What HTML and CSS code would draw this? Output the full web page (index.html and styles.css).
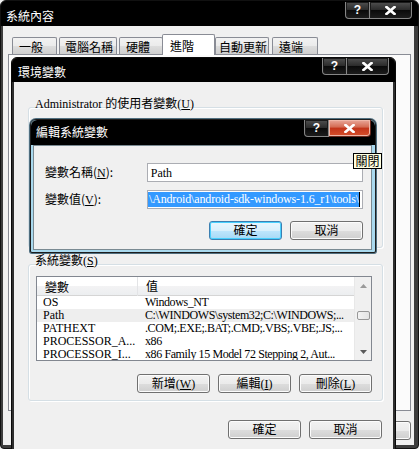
FILE: index.html
```html
<!DOCTYPE html>
<html>
<head>
<meta charset="utf-8">
<title>環境變數</title>
<link rel="stylesheet" href="styles.css">
</head>
<body>
<div class="win outer">
  <div class="tbar otbar">
    <span class="ttl">系統內容</span>
    <div class="tbtns"><span class="tb help">?</span><span class="tb close"><svg width="11" height="9" viewBox="0 0 11 9"><path d="M1.5 1 L9.5 8 M9.5 1 L1.5 8" stroke="#fff" stroke-width="2.6" stroke-linecap="square"/></svg></span></div>
  </div>
  <div class="obody">
    <div class="tabs">
      <span class="tab">一般</span><span class="tab">電腦名稱</span><span class="tab">硬體</span><span class="tab sel">進階</span><span class="tab">自動更新</span><span class="tab">遠端</span>
    </div>
    <div class="panel"></div>
    <div class="btnrow obtns"><span class="btn" aria-label="確定"></span><span class="btn" aria-label="取消"></span><span class="btn" aria-label="套用"></span></div>
  </div>
</div>

<div class="win env">
  <div class="tbar etbar">
    <span class="ttl">環境變數</span>
    <div class="tbtns"><span class="tb help">?</span><span class="tb close"><svg width="11" height="9" viewBox="0 0 11 9"><path d="M1.5 1 L9.5 8 M9.5 1 L1.5 8" stroke="#fff" stroke-width="2.6" stroke-linecap="square"/></svg></span></div>
  </div>
  <div class="ebody">
    <div class="glabel">Administrator 的使用者變數(<u>U</u>)</div>
    <div class="group g1"></div>
    <div class="glabel">系統變數(<u>S</u>)</div>
    <div class="group g2">
      <div class="list">
        <div class="lmain">
          <div class="lhead"><span class="c1">變數</span><span class="c2">值</span></div>
          <div class="row"><span class="c1">OS</span><span class="c2">Windows_NT</span></div>
          <div class="row cur"><span class="c1">Path</span><span class="c2">C:\WINDOWS\system32;C:\WINDOWS;...</span></div>
          <div class="row"><span class="c1">PATHEXT</span><span class="c2">.COM;.EXE;.BAT;.CMD;.VBS;.VBE;.JS;...</span></div>
          <div class="row"><span class="c1">PROCESSOR_A...</span><span class="c2">x86</span></div>
          <div class="row"><span class="c1">PROCESSOR_I...</span><span class="c2">x86 Family 15 Model 72 Stepping 2, Aut...</span></div>
        </div>
        <div class="vscroll">
          <span class="arr"><svg width="7" height="4" viewBox="0 0 7 4"><path d="M0 4 L3.5 0 L7 4 Z" fill="#9a9a9a"/></svg></span>
          <span class="track"><span class="thumb"></span></span>
          <span class="arr"><svg width="7" height="4" viewBox="0 0 7 4"><path d="M0 0 L3.5 4 L7 0 Z" fill="#5a5a5a"/></svg></span>
        </div>
      </div>
      <div class="btnrow lbtns"><span class="btn">新增(<u>W</u>)</span><span class="btn">編輯(<u>I</u>)</span><span class="btn">刪除(<u>L</u>)</span></div>
    </div>
    <div class="btnrow ebtns"><span class="btn">確定</span><span class="btn">取消</span></div>
  </div>
</div>

<div class="win edit">
  <div class="tbar dtbar">
    <span class="ttl">編輯系統變數</span>
    <div class="tbtns"><span class="tb help">?</span><span class="tb close red"><svg width="11" height="9" viewBox="0 0 11 9"><path d="M1.5 1 L9.5 8 M9.5 1 L1.5 8" stroke="#fff" stroke-width="2.6" stroke-linecap="square"/></svg></span></div>
  </div>
  <div class="dbody">
    <div class="frow"><span class="flabel">變數名稱(<u>N</u>):</span><span class="field">Path</span></div>
    <div class="frow"><span class="flabel">變數值(<u>V</u>):</span><span class="field selfield"><span class="hl">\Android\android-sdk-windows-1.6_r1\tools\</span><span class="caret"></span></span></div>
    <div class="btnrow dbtns"><span class="btn focus">確定</span><span class="btn">取消</span></div>
  </div>
</div>

<div class="tip">關閉</div>
</body>
</html>
```
FILE: styles.css
```css
* { box-sizing: border-box; margin: 0; padding: 0; }
html, body { width: 419px; height: 449px; overflow: hidden; }
body {
  position: relative;
  background: #f0f0f0;
  font: 12px/14px "Liberation Serif", "Noto Sans CJK TC", serif;
  color: #000;
}
u { text-decoration: underline; }

/* generic window */
.win { position: absolute; display: flex; flex-direction: column; }
.tbar {
  display: flex; justify-content: space-between; align-items: flex-start;
  background: #000; color: #fff; flex: none;
}
.ttl { font-family: "Noto Sans CJK TC", sans-serif; font-size: 12px; line-height: 14px; color: #fff; }
.tbtns { display: flex; }
.tb {
  height: 17px; display: flex; align-items: center; justify-content: center;
  color: #fff; font: bold 12px/1 "Liberation Sans", sans-serif;
  border: 1px solid #868686; border-top: 0;
  background: linear-gradient(#505050, #2a2a2a 50%, #0a0a0a 51%, #1c1c1c);
  box-shadow: inset 0 0 0 1px #1a1a1a;
}
.tb.help { width: 25px; border-radius: 0 0 0 4px; }
.tb.close { width: 42px; border-left: 0; border-radius: 0 0 4px 0; }
.tb.red {
  background: linear-gradient(#e9a89a, #d46a52 45%, #c2341a 50%, #d7502b);
  border-color: #6d2a1e;
  box-shadow: inset 0 0 0 1px #f0b7a8;
}

/* buttons */
.btnrow { display: flex; justify-content: flex-end; gap: 8px; }
.btn {
  width: 73px; height: 19px; display: flex; align-items: center; justify-content: center;
  border: 1px solid #707070; border-radius: 3px;
  background: linear-gradient(#f2f2f2, #ebebeb 50%, #dddddd 51%, #cfcfcf);
  box-shadow: inset 0 0 0 1px #fcfcfc;
  font-size: 12px; line-height: 14px;
}
.btn.focus {
  border-color: #3c7fb1;
  box-shadow: inset 0 0 0 1px #48d0fe;
  background: linear-gradient(#eaf6fd, #d9f0fc 50%, #bee6fd 51%, #a7d9f5);
}

/* outer window */
.outer {
  left: 0; top: 0; width: 419px; height: 449px;
  background: #3d3d3d; border: 1px solid #111; border-radius: 6px 6px 4px 4px;
  overflow: hidden;
}
.otbar { height: 25px; padding-left: 5px; padding-right: 6px; }
.otbar .ttl { margin-top: 8px; }
.otbar .tbtns { margin-top: 1px; }
.obody {
  flex: 1; margin: 0 4px 3px 2px; background: #f0f0f0;
  display: flex; flex-direction: column;
}
.tabs { display: flex; align-items: flex-end; height: 21px; margin-top: 7px; padding-left: 9px; position: relative; z-index: 1; }
.tab {
  height: 17px; padding: 2px 0 0 6px; margin-right: 2px;
  border: 1px solid #898c95; border-bottom: 0; border-radius: 2px 2px 0 0;
  background: linear-gradient(#f2f2f2, #ebebeb 50%, #dddddd 51%, #cfcfcf);
  font-family: "Noto Sans CJK TC", sans-serif; line-height: 14px; white-space: nowrap;
}
.tab:nth-child(1) { width: 45px; }
.tab:nth-child(2) { width: 58px; padding-left: 5px; }
.tab:nth-child(3) { width: 44px; margin-right: 0; }
.tab.sel { width: 53px; height: 21px; padding: 4px 0 0 7px; margin: 0 0 -1px -1px; background: #fff; border-color: #898c95; }
.tab:nth-child(5) { width: 54px; margin-left: 0; padding-left: 3px; }
.tab:nth-child(6) { width: 46px; margin-left: 1px; }
.panel { height: 357px; margin: 0 3px 0 5px; border: 1px solid #898c95; background: #fbfbfb; flex: none; }
.obtns { margin: 10px 3px 0 0; }

/* environment window */
.env {
  left: 11px; top: 57px; width: 385px; height: 400px;
  background: #2e2e2e; border: 1px solid #0a0a0a; border-radius: 6px 6px 0 0;
}
.etbar { height: 24px; padding-left: 6px; padding-right: 6px; border-radius: 6px 6px 0 0; }
.etbar .ttl { margin-top: 7px; }
.ebody {
  flex: 1; margin: 0 2px; background: #f0f0f0;
  padding: 15px 10px 0 14px;
  display: flex; flex-direction: column;
}
.glabel { height: 14px; line-height: 14px; padding-left: 7px; position: relative; z-index: 1; }
.group {
  border: 1px solid #d5dfe5; border-radius: 3px;
  box-shadow: inset 1px 1px 0 #fff, 1px 1px 0 #fff;
  margin-top: -4px;
}
.g1 { height: 141px; margin-bottom: 6px; }
.g2 { height: 137px; padding: 11px 10px 0 7px; }

.list {
  height: 85px; border: 1px solid #828790; background: #fff;
  display: flex;
}
.lmain { flex: 1; overflow: hidden; }
.lhead {
  display: flex; height: 19px; align-items: center;
  background: linear-gradient(#fff 50%, #f3f3f4 51%, #eceef0);
  border-bottom: 1px solid #d5d5d5;
  font-family: "Noto Sans CJK TC", sans-serif;
}
.lhead .c1 { width: 101px; padding-left: 8px; border-right: 1px solid #e3e4e6; height: 19px; line-height: 19px; }
.lhead .c2 { padding-left: 8px; }
.row { display: flex; height: 13px; line-height: 13px; white-space: nowrap; }
.row.cur { background: #eeeeee; }
.row .c1 { width: 101px; padding-left: 6px; overflow: hidden; }
.row .c2 { flex: 1; min-width: 0; padding-left: 7px; overflow: hidden; letter-spacing: -0.4px; }

.vscroll {
  width: 17px; flex: none; display: flex; flex-direction: column;
  background: #f0f0f0; border-left: 1px solid #e8e8e8;
}
.arr { height: 17px; display: flex; align-items: center; justify-content: center; }
.track { flex: 1; position: relative; display: flex; flex-direction: column; }
.thumb {
  margin: 17px 1px 0 2px; height: 9px;
  border: 1px solid #979797; border-radius: 2px;
  background: linear-gradient(90deg, #f3f3f3, #e4e4e4);
}

.lbtns { margin-top: 13px; }
.ebtns { margin-top: 19px; margin-right: 1px; }

/* edit dialog */
.edit {
  left: 30px; top: 119px; width: 346px; height: 134px;
  background: #a9d9ee; border: 1px solid #1d1d1d; border-radius: 6px 6px 2px 2px;
  box-shadow: 0 0 0 1px #506f80;
}
.dtbar { height: 25px; padding-left: 5px; padding-right: 4px; border-radius: 6px 6px 0 0; }
.dtbar .ttl { margin-top: 5px; }
.dbody {
  flex: 1; margin: 0 3px 2px 2px; background: #f0f0f0;
  border: 1px solid #7a8a92;
  padding: 17px 8px 0 11px;
  display: flex; flex-direction: column; gap: 8px;
}
.frow { display: flex; align-items: center; }
.flabel { width: 103px; font-family: "Noto Sans CJK TC", sans-serif; }
.flabel u { font-family: "Liberation Serif", serif; }
.field {
  width: 219px; height: 19px; border: 1px solid #abadb3; background: #fff;
  padding: 2px 0 0 3px; white-space: nowrap; overflow: hidden;
}
.selfield { display: flex; justify-content: flex-end; padding: 1px 2px 1px 1px; }
.hl { background: #3399ff; color: #fff; line-height: 15px; height: 15px; flex: none; letter-spacing: -0.15px; padding-left: 1px; }
.caret { width: 1px; height: 15px; background: #000; flex: none; }
.dbtns { margin-top: 4px; }

/* tooltip */
.tip {
  position: absolute; left: 353px; top: 153px; width: 29px; height: 16px;
  background: #ffffe1; border: 1px solid #000;
  font-family: "Noto Sans CJK TC", sans-serif; line-height: 14px; text-align: center;
}
```
